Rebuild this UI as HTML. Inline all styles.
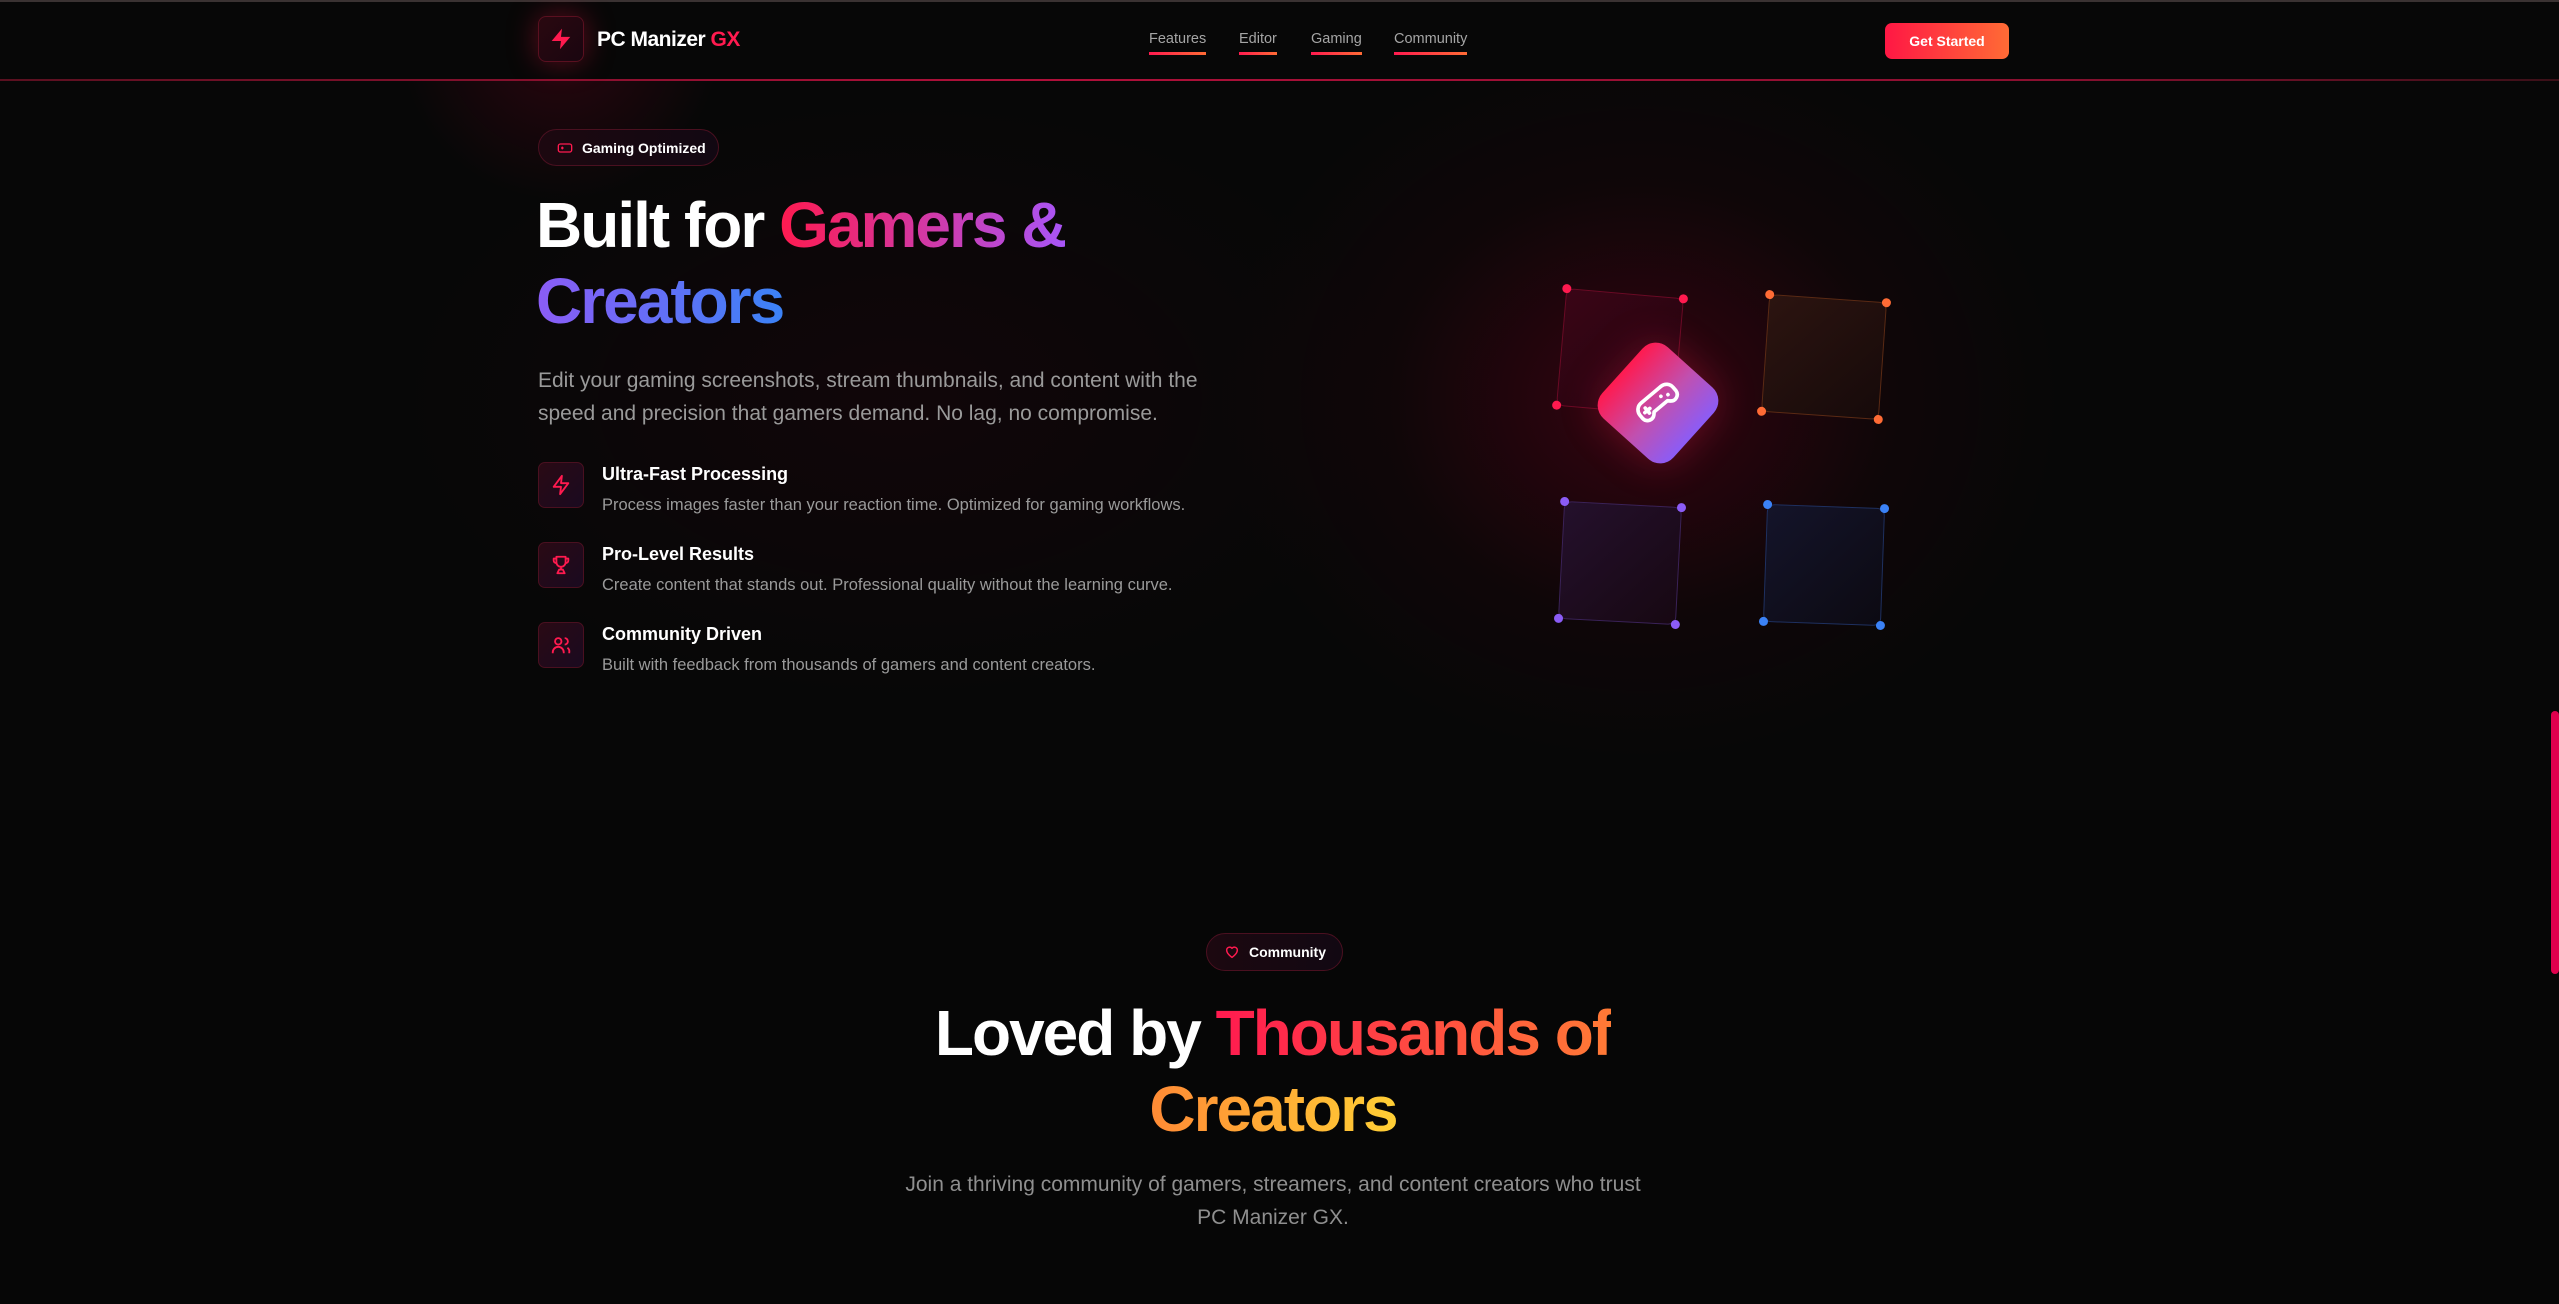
<!DOCTYPE html>
<html><head><meta charset="utf-8"><style>
*{margin:0;padding:0;box-sizing:border-box}
html,body{width:2559px;height:1304px;overflow:hidden;background:#060606;font-family:"Liberation Sans",sans-serif;color:#fff}
.abs{position:absolute}
.hero{position:absolute;left:0;top:0;width:2559px;height:810px;background:
radial-gradient(ellipse 420px 360px at 1640px 400px,rgba(120,0,30,.4),rgba(60,0,15,.15) 60%,transparent 100%),
radial-gradient(ellipse 500px 300px at 900px 400px,rgba(60,0,20,.18),transparent 100%),
radial-gradient(ellipse 160px 160px at 560px 40px,rgba(150,0,40,.25),transparent 100%),#070707}
.nav{position:absolute;left:0;top:0;width:2559px;height:81px;border-bottom:2px solid;border-image:linear-gradient(90deg,#5a1020,#b0103a 40%,#8a1030 80%,#3a1018) 1;background:#070707}
.topl{position:absolute;left:0;top:0;width:2559px;height:2px;background:#3a3232}
.logo{left:538px;top:16px;width:46px;height:46px;border-radius:8px;border:1px solid #5a1020;background:linear-gradient(135deg,#2a0810,#1a0610);box-shadow:0 0 30px rgba(255,20,70,.35)}
.brand{left:597px;top:28px;font-size:21px;font-weight:700;letter-spacing:-.5px}
.nl{top:31px;font-size:14.5px;color:#a5a5a5}
.nl:after{content:"";position:absolute;left:0;right:0;top:21px;height:3px;background:linear-gradient(90deg,#ff1a4f,#ff6b35)}
.btn{left:1885px;top:23px;width:124px;height:36px;border-radius:7px;background:linear-gradient(90deg,#ff1744,#ff6b35);font-size:14px;font-weight:700;display:flex;align-items:center;justify-content:center}
.badge{border-radius:20px;border:1px solid #4a1020;background:linear-gradient(90deg,#1c0810,#120812);font-size:14px;font-weight:700;display:flex;align-items:center;gap:9px;padding-left:18px}
h1{font-size:64px;letter-spacing:-2px;font-weight:700;line-height:76px}
.g1{background:linear-gradient(90deg,#ff1a4f,#a855f7);-webkit-background-clip:text;color:transparent}
.g2{background:linear-gradient(90deg,#8b5cf6,#3b82f6);-webkit-background-clip:text;color:transparent}
.g3{background:linear-gradient(90deg,#ff1a4f,#ff7a35);-webkit-background-clip:text;color:transparent}
.g4{background:linear-gradient(90deg,#ff8a35,#ffcf35);-webkit-background-clip:text;color:transparent}
.p{font-size:21px;line-height:33px;color:#9a9a9a}
.fi{left:538px;width:46px;height:46px;border-radius:7px;border:1px solid #4a1020;background:linear-gradient(135deg,#2a0a14,#1a0a20);display:flex;align-items:center;justify-content:center}
.ft{left:602px;font-size:18px;font-weight:700}
.fd{left:602px;font-size:16.5px;color:#9a9a9a}
.sq{width:118px;height:118px;border-radius:8px}
.dot{position:absolute;width:9px;height:9px;border-radius:50%}
</style></head><body>
<div class="hero"></div>
<div class="nav"></div>
<div class="topl"></div>
<div class="abs logo"><svg width="46" height="46" viewBox="0 0 24 24" style="position:absolute;left:-1px;top:-1px"><g transform="translate(5.5 5.5) scale(.54)"><path d="M13 2L3 14h9l-1 8 10-12h-9l1-8z" fill="#ff1a4f"/></g></svg></div>
<div class="abs brand">PC Manizer <span style="color:#ff1a4f">GX</span></div>
<div class="abs nl" style="left:1149px">Features</div>
<div class="abs nl" style="left:1239px">Editor</div>
<div class="abs nl" style="left:1311px">Gaming</div>
<div class="abs nl" style="left:1394px">Community</div>
<div class="abs btn">Get Started</div>

<div class="abs badge" style="left:538px;top:129px;width:181px;height:37px">
<svg width="16" height="16" viewBox="0 0 24 24" fill="none" stroke="#ff1a4f" stroke-width="2"><rect x="2" y="6" width="20" height="12" rx="3"/><path d="M6 12h4M8 10v4M15 11h.01M18 13h.01"/></svg>Gaming Optimized</div>
<h1 class="abs" style="left:536px;top:187px">Built for <span class="g1">Gamers &amp;</span><br><span class="g2">Creators</span></h1>
<div class="abs p" style="left:538px;top:364px;width:690px">Edit your gaming screenshots, stream thumbnails, and content with the speed and precision that gamers demand. No lag, no compromise.</div>

<div class="abs fi" style="top:462px"><svg width="22" height="22" viewBox="0 0 24 24" fill="none" stroke="#ff1a4f" stroke-width="2" stroke-linejoin="round"><path d="M13 2L4 14h8l-1 8 9-12h-8l1-8z"/></svg></div>
<div class="abs ft" style="top:464px">Ultra-Fast Processing</div>
<div class="abs fd" style="top:496px">Process images faster than your reaction time. Optimized for gaming workflows.</div>
<div class="abs fi" style="top:542px"><svg width="22" height="22" viewBox="0 0 24 24" fill="none" stroke="#ff1a4f" stroke-width="2" stroke-linejoin="round"><path d="M7 3h10v6a5 5 0 0 1-10 0zM7 5H4v2a3 3 0 0 0 3 3M17 5h3v2a3 3 0 0 1-3 3M12 14v3M8 21l2-4h4l2 4z"/></svg></div>
<div class="abs ft" style="top:544px">Pro-Level Results</div>
<div class="abs fd" style="top:576px">Create content that stands out. Professional quality without the learning curve.</div>
<div class="abs fi" style="top:622px"><svg width="22" height="22" viewBox="0 0 24 24" fill="none" stroke="#ff1a4f" stroke-width="2"><circle cx="9" cy="8" r="3.5"/><path d="M3 21v-1a6 6 0 0 1 12 0v1M16 4.5a3.5 3.5 0 0 1 0 7M19 15a5 5 0 0 1 2 5v1"/></svg></div>
<div class="abs ft" style="top:624px">Community Driven</div>
<div class="abs fd" style="top:656px">Built with feedback from thousands of gamers and content creators.</div>

<!-- graphic -->
<div class="abs sq" style="left:1561px;top:293px;transform:rotate(5deg);border:1px solid #6a0a25;background:linear-gradient(135deg,#3a0516,#22040e)">
<div class="dot" style="left:-5px;top:-5px;background:#ff1a4f"></div><div class="dot" style="right:-5px;top:-5px;background:#ff1a4f"></div><div class="dot" style="left:-5px;bottom:-5px;background:#ff1a4f"></div></div>
<div class="abs sq" style="left:1765px;top:298px;transform:rotate(4deg);border:1px solid #5a2a14;background:linear-gradient(135deg,#2c1410,#160a0a)">
<div class="dot" style="left:-5px;top:-5px;background:#ff6b35"></div><div class="dot" style="right:-5px;top:-5px;background:#ff6b35"></div><div class="dot" style="left:-5px;bottom:-5px;background:#ff6b35"></div><div class="dot" style="right:-5px;bottom:-5px;background:#ff6b35"></div></div>
<div class="abs sq" style="left:1561px;top:504px;transform:rotate(3deg);border:1px solid #3a2258;background:linear-gradient(135deg,#24102c,#170812)">
<div class="dot" style="left:-5px;top:-5px;background:#8b5cf6"></div><div class="dot" style="right:-5px;top:-5px;background:#8b5cf6"></div><div class="dot" style="left:-5px;bottom:-5px;background:#8b5cf6"></div><div class="dot" style="right:-5px;bottom:-5px;background:#8b5cf6"></div></div>
<div class="abs sq" style="left:1765px;top:506px;transform:rotate(2deg);border:1px solid #1e3060;background:linear-gradient(135deg,#14142a,#0c0a12)">
<div class="dot" style="left:-5px;top:-5px;background:#3b82f6"></div><div class="dot" style="right:-5px;top:-5px;background:#3b82f6"></div><div class="dot" style="left:-5px;bottom:-5px;background:#3b82f6"></div><div class="dot" style="right:-5px;bottom:-5px;background:#3b82f6"></div></div>
<div class="abs" style="left:1610px;top:355px;width:96px;height:96px;border-radius:18px;transform:rotate(42deg);background:linear-gradient(90deg,#ff1a4f,#c050b0 55%,#8b5cf6);box-shadow:0 0 40px rgba(255,30,80,.3)"></div>
<svg class="abs" style="left:1632px;top:377px" width="52" height="52" viewBox="0 0 24 24" fill="none" stroke="#fff" stroke-width="1.7" stroke-linecap="round" stroke-linejoin="round"><g transform="rotate(-40 12 12)"><path d="M6 7h12a4 4 0 0 1 4 4v2a3 3 0 0 1-5 2l-1-1H8l-1 1a3 3 0 0 1-5-2v-2a4 4 0 0 1 4-4z"/><path d="M6 10v3M4.5 11.5h3M15 10.5h.01M18 12h.01"/></g></svg>

<div class="abs" style="left:2551px;top:711px;width:8px;height:263px;border-radius:4px;background:#e0004d"></div>

<!-- community -->
<div class="abs badge" style="left:1206px;top:933px;width:137px;height:38px;padding-left:17px">
<svg width="16" height="16" viewBox="0 0 24 24" fill="none" stroke="#ff1a4f" stroke-width="2.2" stroke-linejoin="round"><path d="M12 20s-8-5-8-11a4.5 4.5 0 0 1 8-2.5A4.5 4.5 0 0 1 20 9c0 6-8 11-8 11z"/></svg>Community</div>
<h1 class="abs" style="left:0;width:2546px;text-align:center;top:995px">Loved by <span class="g3">Thousands of</span><br><span class="g4">Creators</span></h1>
<div class="abs p" style="left:0;width:2546px;text-align:center;top:1168px;color:#8f8f8f">Join a thriving community of gamers, streamers, and content creators who trust<br>PC Manizer GX.</div>
</body></html>
